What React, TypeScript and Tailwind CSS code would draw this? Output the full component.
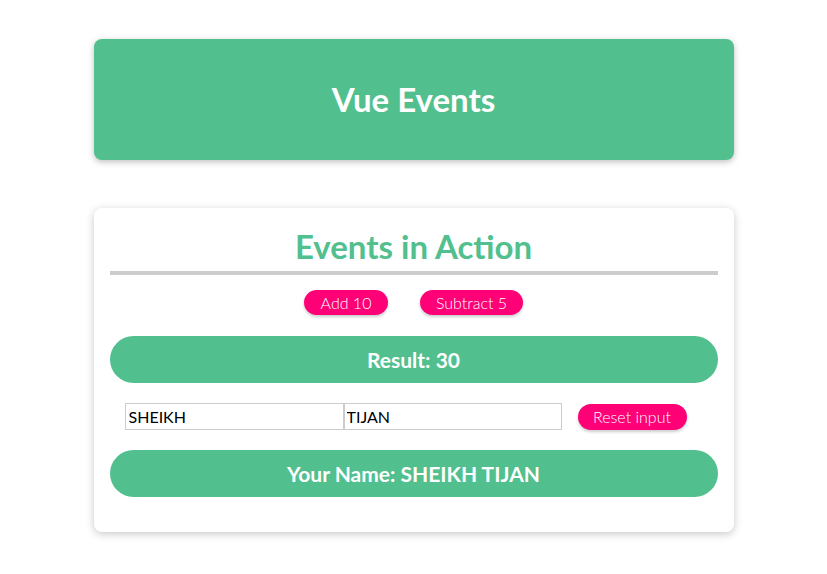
import { useState } from "react";

export default function App() {
    const [result, setResult] = useState(30)
    const [first, setFirst] = useState("SHEIKH")
    const [last, setLast] = useState("TIJAN")

    return (
        <div className="min-h-screen bg-white pt-[39px] font-['Lato',sans-serif]">
            <header className="w-[640px] h-[121px] mx-auto bg-[#51c08e] rounded-lg shadow-[0_2px_6px_rgba(0,0,0,0.25)] flex items-center justify-center">
                <h1 className="text-white text-[33px] font-bold">Vue Events</h1>
            </header>

            <section className="w-[640px] mx-auto mt-[48px] bg-white rounded-lg shadow-[0_2px_8px_rgba(0,0,0,0.22)] px-4 pt-[19px] pb-[35px]">
                <h2 className="text-[#51c08e] text-[33px] font-bold text-center leading-[38px]">Events in Action</h2>
                <div className="h-[4px] bg-[#cccccc] mt-[6px]"></div>

                <div className="flex justify-center gap-8 mt-[15px]">
                    <button
                        onClick={() => setResult(result + 10)}
                        className="bg-[#ff0077] text-white text-[16px] font-light rounded-full w-[84px] h-[25px] shadow-[0_2px_3px_rgba(0,0,0,0.2)] cursor-pointer"
                    >
                        Add 10
                    </button>
                    <button
                        onClick={() => setResult(result - 5)}
                        className="bg-[#ff0077] text-white text-[16px] font-light rounded-full w-[103px] h-[25px] shadow-[0_2px_3px_rgba(0,0,0,0.2)] cursor-pointer"
                    >
                        Subtract 5
                    </button>
                </div>

                <div className="mt-[21px] h-[47px] rounded-full bg-[#51c08e] flex items-center justify-center">
                    <p className="text-white text-[21px] font-bold">Result: {result}</p>
                </div>

                <div className="flex items-center mt-[20px] pl-[15px]">
                    <input
                        value={first}
                        onChange={(e) => setFirst(e.target.value)}
                        className="w-[219px] h-[27px] border border-[#cccccc] px-[3px] text-[16px] text-black outline-none"
                    />
                    <input
                        value={last}
                        onChange={(e) => setLast(e.target.value)}
                        className="w-[218px] h-[27px] border border-[#cccccc] px-[2px] text-[16px] text-black outline-none"
                    />
                    <button
                        onClick={() => { setFirst(""); setLast("") }}
                        className="ml-[16px] bg-[#ff0077] text-white text-[16px] font-light rounded-full w-[109px] h-[26px] shadow-[0_2px_3px_rgba(0,0,0,0.2)] cursor-pointer"
                    >
                        Reset input
                    </button>
                </div>

                <div className="mt-[20px] h-[47px] rounded-full bg-[#51c08e] flex items-center justify-center">
                    <p className="text-white text-[21px] font-bold">Your Name: {first} {last}</p>
                </div>
            </section>
        </div>
    );
}
